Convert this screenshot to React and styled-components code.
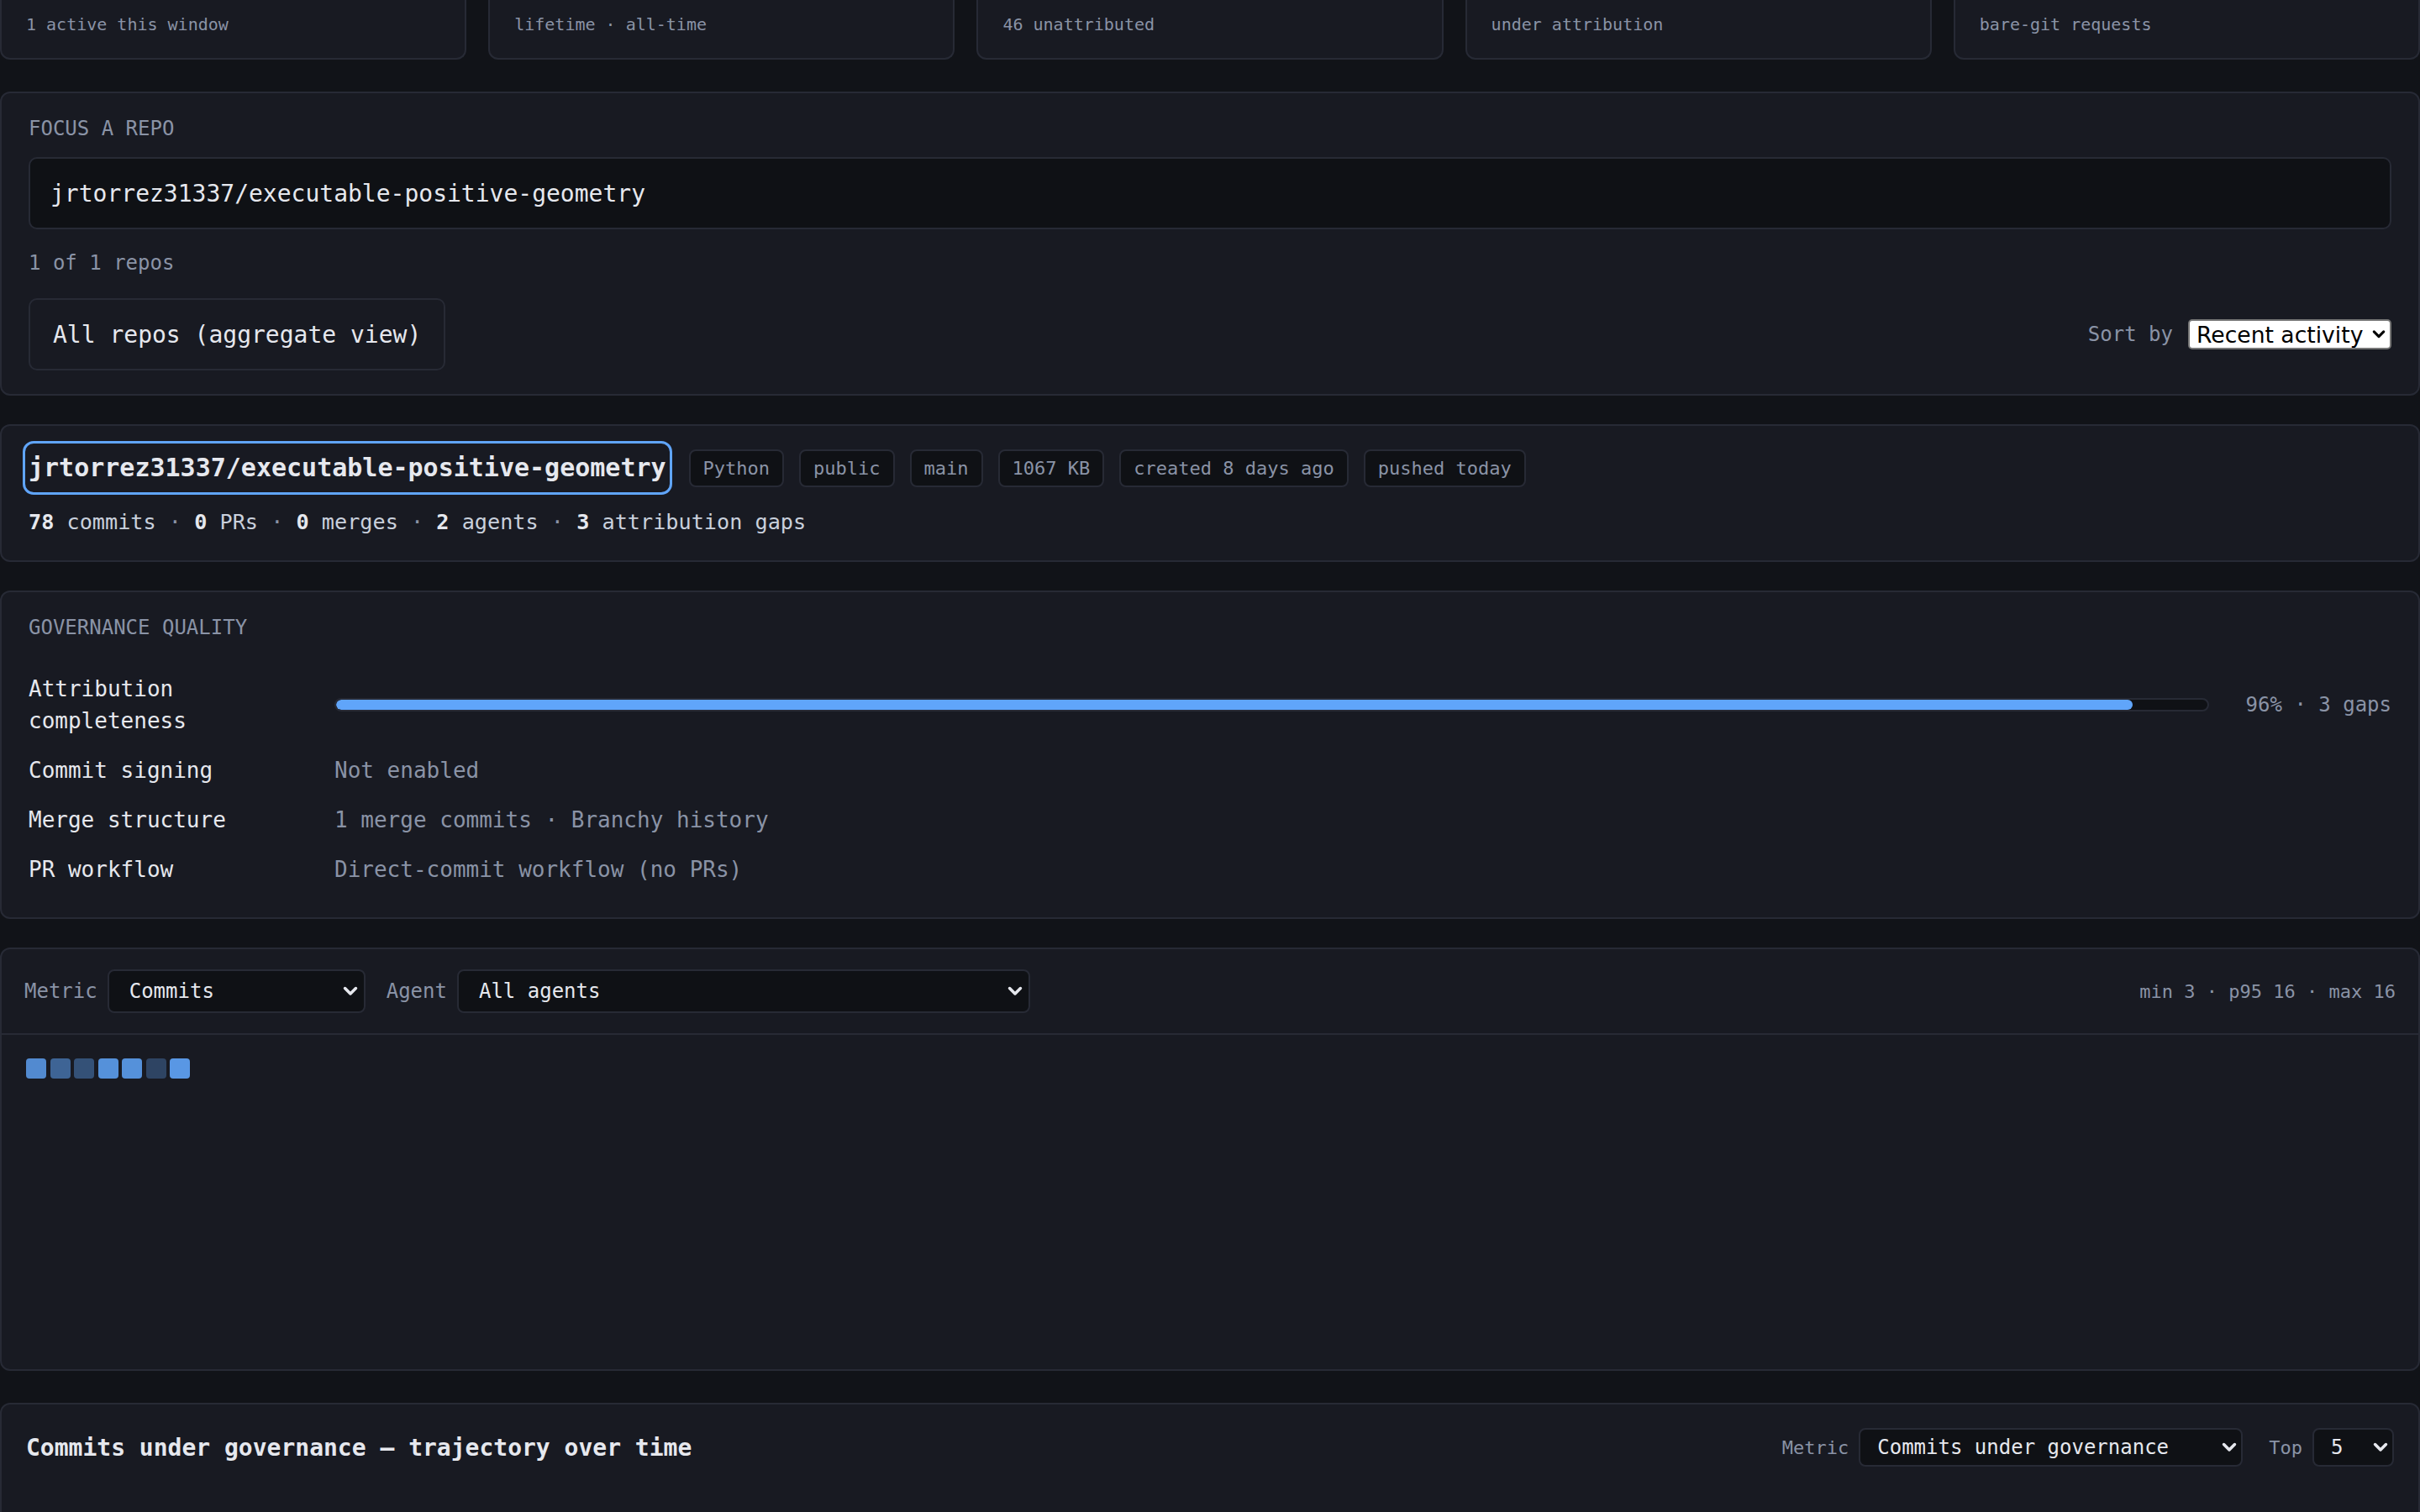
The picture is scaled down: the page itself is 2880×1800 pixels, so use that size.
import React from "react";
import styled, { createGlobalStyle } from "styled-components";

const C = {
  page: "#111318",
  panel: "#181a22",
  border: "#272a35",
  well: "#0f1115",
  text: "#e6e8ee",
  soft: "#c9d0dc",
  muted: "#8a93a6",
  blue: "#60a5fa",
};

const Global = createGlobalStyle`
  html, body { margin: 0; padding: 0; background: ${C.page}; }
  body {
    font-family: "DejaVu Sans Mono", "Liberation Mono", monospace;
    color: ${C.text};
    overflow: hidden;
  }
  * { box-sizing: border-box; }
`;

const Page = styled.main`
  display: flex;
  flex-direction: column;
  gap: 34px;
  width: 2880px;
`;

/* ---------- summary strip (scrolled partly out of view) ---------- */
const StatStrip = styled.section`
  display: grid;
  grid-template-columns: repeat(5, 1fr);
  gap: 26px;
  margin-bottom: 4px;
`;
const StatCard = styled.div`
  background: ${C.panel};
  border: 2px solid ${C.border};
  border-top: none;
  border-radius: 0 0 12px 12px;
  padding: 14px 29px 25px;
`;
const StatFoot = styled.div`
  font-size: 20px;
  line-height: 30px;
  color: ${C.muted};
`;

/* ---------- generic panel ---------- */
const Panel = styled.section`
  background: ${C.panel};
  border: 2px solid ${C.border};
  border-radius: 12px;
  padding: ${(p) => p.$pad || "28px 32px"};
  margin-top: ${(p) => p.$lift || 0}px;
`;
const Eyebrow = styled.div`
  font-size: 24px;
  line-height: 29px;
  text-transform: uppercase;
  color: ${C.muted};
  margin-bottom: ${(p) => p.$gap || 19}px;
`;

/* ---------- focus a repo ---------- */
const SearchInput = styled.input`
  display: block;
  width: 100%;
  height: 86px;
  padding: 0 24px;
  font: 28px "DejaVu Sans Mono", monospace;
  color: ${C.text};
  background: ${C.well};
  border: 2px solid ${C.border};
  border-radius: 10px;
  outline: none;
`;
const Hint = styled.div`
  font-size: 24px;
  line-height: 36px;
  color: ${C.muted};
  margin: 22px 0 24px;
`;
const SplitRow = styled.div`
  display: flex;
  align-items: center;
  justify-content: space-between;
`;
const GhostButton = styled.button`
  height: 86px;
  padding: 0 27px;
  font: 28px "DejaVu Sans Mono", monospace;
  color: ${C.text};
  background: ${C.panel};
  border: 2px solid ${C.border};
  border-radius: 10px;
`;
const Inline = styled.label`
  display: flex;
  align-items: center;
  gap: ${(p) => p.$gap || 12}px;
  font-size: ${(p) => p.$size || 24}px;
  color: ${C.muted};
`;
const Field = styled.span`
  position: relative;
  display: inline-flex;
`;
const LightSelect = styled.select`
  appearance: none;
  width: 242px;
  height: 36px;
  padding: 0 30px 0 8px;
  font: 26.6px "DejaVu Sans", sans-serif;
  color: #000;
  background: #fff;
  border: 2px solid #767676;
  border-radius: 5px;
`;
const DarkSelect = styled.select`
  appearance: none;
  width: ${(p) => p.$w}px;
  height: ${(p) => p.$h || 52}px;
  padding: 0 40px 0 ${(p) => p.$padL || 24}px;
  font: 24px "DejaVu Sans Mono", monospace;
  color: ${C.text};
  background: ${C.well};
  border: 2px solid ${C.border};
  border-radius: 8px;
`;
const Caret = styled.svg`
  position: absolute;
  right: ${(p) => p.$r || 9}px;
  top: 50%;
  transform: translateY(-50%);
  pointer-events: none;
`;
const Chevron = ({ color = C.text, r, w = 18 }) => (
  <Caret $r={r} width={w} height={w * 0.66} viewBox="0 0 18 12">
    <path d="M2.5 2.5 L9 9 L15.5 2.5" fill="none" stroke={color} strokeWidth="3.6" strokeLinecap="round" strokeLinejoin="round" />
  </Caret>
);

/* ---------- repo card ---------- */
const RepoHead = styled.div`
  display: flex;
  align-items: center;
  gap: 18px;
  margin-bottom: 20px;
`;
const RepoTitle = styled.h2`
  margin: 0 9px 0 0;
  padding: 7px 0;
  font-size: 30px;
  line-height: 36px;
  font-weight: 700;
  color: ${C.text};
  outline: 3px solid ${C.blue};
  outline-offset: 4px;
  border-radius: 6px;
`;
const Tag = styled.span`
  padding: 4px 15px;
  font-size: 22px;
  line-height: 33px;
  color: ${C.muted};
  background: ${C.well};
  border: 2px solid ${C.border};
  border-radius: 8px;
`;
const Counts = styled.div`
  font-size: 25.2px;
  line-height: 39px;
  color: ${C.soft};
  b { color: ${C.text}; }
`;
const Sep = styled.span`
  color: ${C.muted};
`;

/* ---------- governance quality ---------- */
const QualityRow = styled.div`
  display: grid;
  grid-template-columns: 320px 1fr auto;
  column-gap: 44px;
  align-items: center;
  padding: 10.5px 0;
  font-size: 26px;
  line-height: 38px;
`;
const RowLabel = styled.div`
  color: ${C.text};
`;
const RowValue = styled.div`
  grid-column: 2 / span 2;
  color: ${C.muted};
`;
const Track = styled.div`
  height: 16px;
  background: ${C.well};
  border: 2px solid ${C.border};
  border-radius: 8px;
  overflow: hidden;
`;
const Fill = styled.div`
  height: 100%;
  background: ${C.blue};
  border-radius: 6px;
`;
const BarNote = styled.div`
  font-size: 24px;
  color: ${C.muted};
`;

/* ---------- activity heatmap ---------- */
const HeatPanel = styled.section`
  background: ${C.panel};
  border: 2px solid ${C.border};
  border-radius: 12px;
  overflow: hidden;
`;
const Toolbar = styled.div`
  display: flex;
  align-items: center;
  gap: 25px;
  padding: 24px 27px;
  border-bottom: 2px solid ${C.border};
`;
const Range = styled.div`
  margin-left: auto;
  font-size: 22px;
  color: ${C.muted};
`;
const HeatBody = styled.div`
  min-height: 398px;
  padding: 28px 29px;
`;
const Cells = styled.div`
  display: flex;
  gap: 4.5px;
`;
const Cell = styled.div`
  width: 24px;
  height: 24px;
  border-radius: 4px;
`;

/* ---------- trajectory ---------- */
const TrajHead = styled.div`
  display: flex;
  align-items: center;
  gap: 31px;
`;
const TrajTitle = styled.h3`
  margin: 0 auto 0 0;
  font-size: 28px;
  font-weight: 700;
  color: ${C.text};
`;
const ChartArea = styled.div`
  height: 320px;
`;

const stats = ["1 active this window", "lifetime · all-time", "46 unattributed", "under attribution", "bare-git requests"];
const tags = ["Python", "public", "main", "1067 KB", "created 8 days ago", "pushed today"];
const daily = [14, 8, 5, 15, 15, 3, 16];

function heatColor(v, min, max) {
  const a = 0.3 + 0.6 * ((v - min) / (max - min));
  const mix = (hi, lo) => Math.round(hi * a + lo * (1 - a));
  return `rgb(${mix(96, 24)}, ${mix(165, 26)}, ${mix(250, 34)})`;
}

export default function App() {
  const min = Math.min(...daily);
  const max = Math.max(...daily);
  return (
    <>
      <Global />
      <Page>
        <StatStrip>
          {stats.map((s) => (
            <StatCard key={s}>
              <StatFoot>{s}</StatFoot>
            </StatCard>
          ))}
        </StatStrip>

        <Panel>
          <Eyebrow>Focus a repo</Eyebrow>
          <SearchInput defaultValue="jrtorrez31337/executable-positive-geometry" />
          <Hint>1 of 1 repos</Hint>
          <SplitRow>
            <GhostButton>All repos (aggregate view)</GhostButton>
            <Inline $gap={18}>
              Sort by
              <Field>
                <LightSelect defaultValue="recent">
                  <option value="recent">Recent activity</option>
                  <option value="name">Name</option>
                </LightSelect>
                <Chevron color="#000" r={7} w={16} />
              </Field>
            </Inline>
          </SplitRow>
        </Panel>

        <Panel $pad="25px 32px 26px">
          <RepoHead>
            <RepoTitle>jrtorrez31337/executable-positive-geometry</RepoTitle>
            {tags.map((t) => (
              <Tag key={t}>{t}</Tag>
            ))}
          </RepoHead>
          <Counts>
            <b>78</b> commits <Sep>·</Sep> <b>0</b> PRs <Sep>·</Sep> <b>0</b> merges <Sep>·</Sep> <b>2</b> agents <Sep>·</Sep> <b>3</b> attribution gaps
          </Counts>
        </Panel>

        <Panel $pad="28px 32px 28px">
          <Eyebrow $gap={28}>Governance quality</Eyebrow>
          <QualityRow>
            <RowLabel>Attribution completeness</RowLabel>
            <Track>
              <Fill style={{ width: "96%" }} />
            </Track>
            <BarNote>96% · 3 gaps</BarNote>
          </QualityRow>
          <QualityRow>
            <RowLabel>Commit signing</RowLabel>
            <RowValue>Not enabled</RowValue>
          </QualityRow>
          <QualityRow>
            <RowLabel>Merge structure</RowLabel>
            <RowValue>1 merge commits · Branchy history</RowValue>
          </QualityRow>
          <QualityRow>
            <RowLabel>PR workflow</RowLabel>
            <RowValue>Direct-commit workflow (no PRs)</RowValue>
          </QualityRow>
        </Panel>

        <HeatPanel>
          <Toolbar>
            <Inline>
              Metric
              <Field>
                <DarkSelect $w={307} defaultValue="commits">
                  <option value="commits">Commits</option>
                </DarkSelect>
                <Chevron />
              </Field>
            </Inline>
            <Inline>
              Agent
              <Field>
                <DarkSelect $w={682} defaultValue="all">
                  <option value="all">All agents</option>
                </DarkSelect>
                <Chevron />
              </Field>
            </Inline>
            <Range>min 3 · p95 16 · max 16</Range>
          </Toolbar>
          <HeatBody>
            <Cells>
              {daily.map((v, i) => (
                <Cell key={i} style={{ background: heatColor(v, min, max) }} />
              ))}
            </Cells>
          </HeatBody>
        </HeatPanel>

        <Panel $lift={4} $pad="28px 29px">
          <TrajHead>
            <TrajTitle>Commits under governance — trajectory over time</TrajTitle>
            <Inline $size={22}>
              Metric
              <Field>
                <DarkSelect $w={457} $h={46} $padL={20} defaultValue="cug">
                  <option value="cug">Commits under governance</option>
                </DarkSelect>
                <Chevron r={7} />
              </Field>
            </Inline>
            <Inline $size={22}>
              Top
              <Field>
                <DarkSelect $w={97} $h={46} $padL={20} defaultValue="5">
                  <option value="5">5</option>
                </DarkSelect>
                <Chevron r={7} />
              </Field>
            </Inline>
          </TrajHead>
          <ChartArea />
        </Panel>
      </Page>
    </>
  );
}
